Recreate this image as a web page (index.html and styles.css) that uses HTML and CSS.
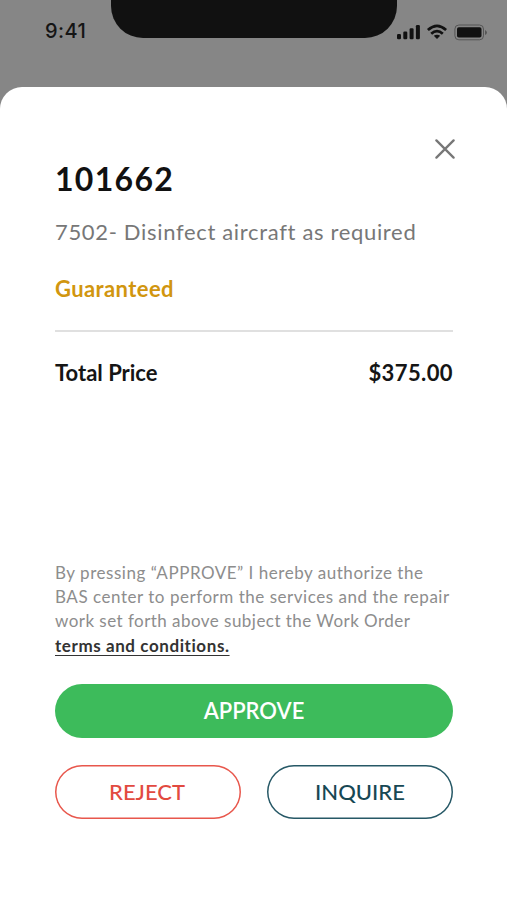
FILE: index.html
```html
<!DOCTYPE html>
<html lang="en">
<head>
<meta charset="utf-8">
<meta name="viewport" content="width=device-width, initial-scale=1">
<title>Work Order 101662</title>
<link rel="stylesheet" href="styles.css">
</head>
<body>
<div class="screen">
  <header class="status">
    <span class="clock">9:41</span>
    <div class="notch"></div>
    <svg class="indicators" width="92" height="18" viewBox="0 0 92 18" aria-hidden="true">
      <g fill="#111">
        <rect x="1" y="11" width="4" height="5.2" rx="1.2"/>
        <rect x="7.3" y="8.6" width="4" height="7.6" rx="1.2"/>
        <rect x="13.6" y="5.2" width="4" height="11" rx="1.2"/>
        <rect x="19.9" y="2" width="4" height="14.2" rx="1.2"/>
        <path d="M41 16L37.8 12.8Q41 10.5 44.2 12.8Z"/>
        <rect x="61" y="4.3" width="24.5" height="10.2" rx="1.8"/>
      </g>
      <g fill="none" stroke="#111" stroke-width="2.7">
        <path d="M31.9 7Q41 -1.3 50.1 7"/>
        <path d="M35.2 10.8Q41 5.5 46.8 10.8"/>
      </g>
      <rect x="58.9" y="2" width="28.6" height="14.8" rx="4" fill="none" stroke="#555" stroke-width="1"/>
      <path d="M89 7v5Q91 11 91 9.500T89 7" fill="#555"/>
    </svg>
  </header>
  <main class="sheet">
    <button class="close" aria-label="Close">
      <svg width="20" height="20" viewBox="0 0 20 20"><path d="M1.400 1.400L18.600 18.600M18.600 1.400L1.400 18.600" fill="none" stroke="#777" stroke-width="2.300" stroke-linecap="round"/></svg>
    </button>
    <h1 class="title">101662</h1>
    <p class="task">7502- Disinfect aircraft as required</p>
    <p class="tag">Guaranteed</p>
    <div class="total"><span class="total-label">Total Price</span><span class="total-value">$375.00</span></div>
    <p class="legal">
      <span class="line">By pressing “APPROVE” I hereby authorize the</span>
      <span class="line">BAS center to perform the services and the repair</span>
      <span class="line last">work set forth above subject the Work Order</span>
      <a class="line terms">terms and conditions.</a>
    </p>
    <div class="actions">
      <button class="btn approve">APPROVE</button>
      <button class="btn reject">REJECT</button>
      <button class="btn inquire">INQUIRE</button>
    </div>
  </main>
</div>
</body>
</html>
```
FILE: styles.css
```css
* { box-sizing: border-box; }
body { margin: 0; font-family: Lato, "Liberation Sans", sans-serif; font-variant-ligatures: none; }
h1, p { margin: 0; }
button { font: inherit; padding: 0; margin: 0; border: 0; background: none; }
.screen { width: 507px; height: 900px; background: #868686; overflow: hidden; display: flex; flex-direction: column; }
.status { height: 87px; display: grid; grid-template-columns: 111px 286px 110px; align-items: start; }
.clock { font: 500 20px/24px Inter, sans-serif; letter-spacing: 0.4px; color: #151515; padding-left: 45px; padding-top: 19px; }
.notch { height: 38px; background: #111; border-radius: 0 0 32px 32px; }
.indicators { margin-top: 23px; margin-left: -1px; }
.sheet { flex: 1; background: #fff; border-radius: 22px 22px 0 0; padding: 52px 54px 0 55px; display: flex; flex-direction: column; }
.close { align-self: flex-end; width: 20px; height: 20px; margin-right: -2px; }
.close svg { display: block; }
.title { font-size: 32px; line-height: 40px; font-weight: 700; letter-spacing: 1.3px; color: #111; }
.task { margin-top: 18px; font-size: 22px; line-height: 30px; letter-spacing: 0.67px; color: #777; }
.tag { margin-top: 27px; font-size: 22px; line-height: 30px; font-weight: 700; letter-spacing: 0.4px; color: #d1960f; }
.total { margin-top: 26px; padding-top: 26px; border-top: 2px solid #e0e0e0; display: flex; justify-content: space-between; font-size: 22px; line-height: 30px; font-weight: 700; color: #151515; }
.total-value { letter-spacing: 0.4px; }
.legal { margin-top: 173px; font-size: 17px; line-height: 24.2px; letter-spacing: 0.53px; color: #8d8d8d; }
.line { display: block; width: max-content; white-space: nowrap; }
.last { letter-spacing: 0.46px; }
.terms { letter-spacing: 0.58px; font-weight: 700; color: #333; text-decoration: underline; text-underline-offset: 3px; text-decoration-thickness: 1px; }
.actions { margin-top: 26px; display: grid; grid-template-columns: 186px 186px; gap: 27px 26px; }
.btn { height: 54px; border-radius: 27px; font-size: 22px; font-weight: 500; }
.approve { grid-column: 1 / -1; background: #3dbb5b; color: #fff; font-weight: 600; }
.reject { box-shadow: inset 0 0 0 1.5px #e8574c; color: #e24a40; padding-right: 2px; }
.inquire { box-shadow: inset 0 0 0 1.5px #265866; color: #174854; }
```
